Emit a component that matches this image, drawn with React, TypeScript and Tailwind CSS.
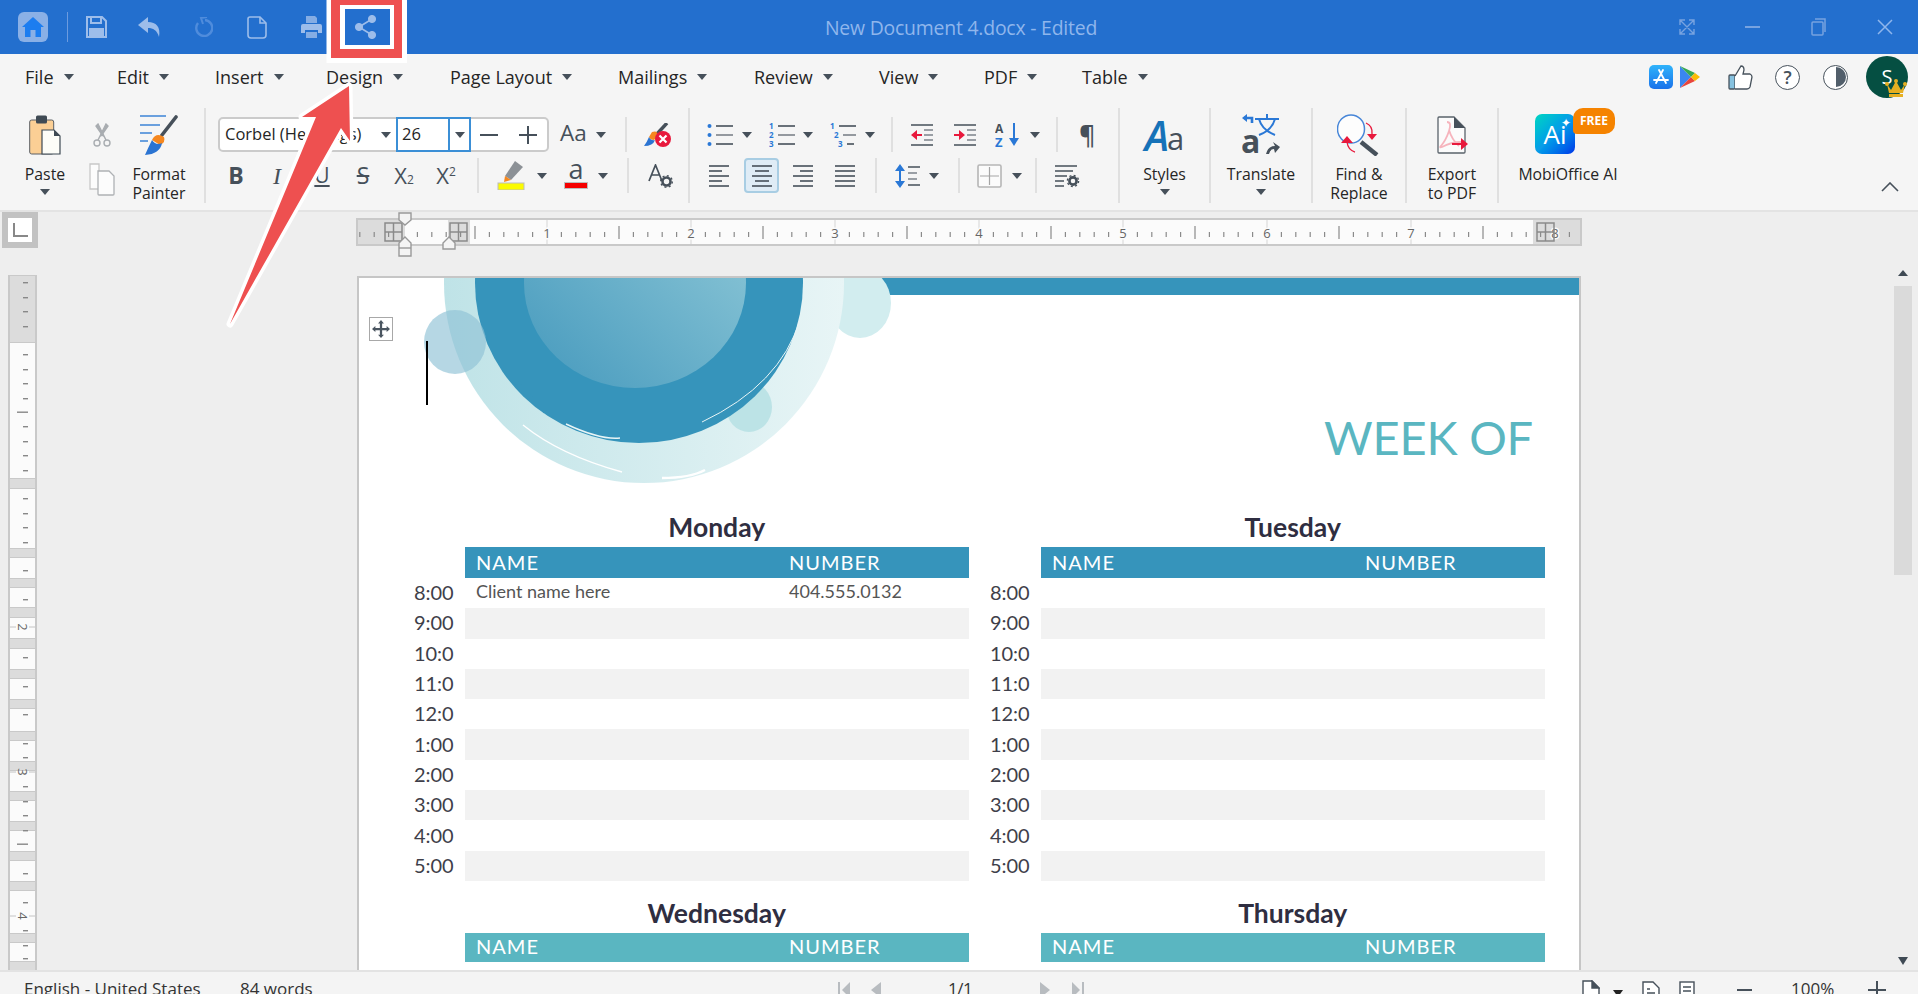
import React from 'react';

const TIMES = ['8:00', '9:00', '10:0', '11:0', '12:0', '1:00', '2:00', '3:00', '4:00', '5:00'];

// [top, bottom, isMargin] bands of the vertical ruler, screen y
const V_BANDS: [number, number, boolean][] = [
    [275, 341, true], [342, 477, false], [478, 487, true], [488, 547, false], [548, 556, true],
    [557, 577, false], [578, 586, true], [587, 606, false], [607, 616, true], [617, 637, false],
    [638, 647, true], [648, 668, false], [669, 677, true], [678, 698, false], [699, 707, true],
    [708, 730, false], [731, 739, true], [740, 760, false], [761, 769, true], [770, 790, false],
    [791, 799, true], [800, 820, false], [821, 829, true], [830, 850, false], [851, 859, true],
    [860, 880, false], [881, 889, true], [890, 932, false], [933, 941, true], [942, 960, false],
    [961, 970, true],
];
const V_TICKS = [283, 298, 312, 327, 355, 370, 384, 399, 427, 442, 456, 471, 499, 514, 528, 543, 571, 600, 658, 687, 715, 744, 758, 787, 802, 816, 831, 874, 903, 931, 946, 959];

function Caret({ className = '' }: { className?: string }) {
    return <div className={`w-0 h-0 shrink-0 border-x-[5px] border-x-transparent border-t-[6px] border-t-[#46505a] ${className}`} />;
}

function Sep({ className = '' }: { className?: string }) {
    return <div className={`w-[2px] shrink-0 self-stretch bg-[#e0e0e0] ${className}`} />;
}

function TitleBar() {
    const c = '#9dbdea';
    return (
        <div className="h-[54px] shrink-0 bg-[#236fce] flex items-center relative">
            <div className="ml-[18px] w-[30px] h-[30px] rounded-[6px] bg-[#8ab0e6] flex items-center justify-center">
                <svg width="24" height="24" viewBox="0 0 24 24"><path d="M12 2 L23 12 H20 V22 H14.5 V15 H9.5 V22 H4 V12 H1 Z" fill="#1c7df0" /></svg>
            </div>
            <div className="ml-[19px] w-[1px] h-[30px] bg-[#6c9bdf]" />
            <svg className="ml-[18px]" width="21" height="22" viewBox="0 0 21 22" fill="none" stroke={c} strokeWidth="2"><path d="M1 1 H16 L20 5 V21 H1 Z" /><path d="M5 1 V7 H15 V1" /><path d="M4 13 H17 V21 H4 Z" fill={c} /></svg>
            <svg className="ml-[31px]" width="23" height="20" viewBox="0 0 23 20"><path d="M10 0 L0 8 L10 16 V11 C15 11 19 13 21 20 C23 10 18 5 10 5 Z" fill={c} /></svg>
            <svg className="ml-[33px]" width="19" height="20" viewBox="0 0 19 20" fill="none" stroke="#4f8cdc" strokeWidth="2.4"><path d="M11 3 A8 8 0 1 1 4 6" /><path d="M13 0 L7 1 L9 7" strokeWidth="2" /></svg>
            <svg className="ml-[34px]" width="20" height="23" viewBox="0 0 20 23" fill="none" stroke={c} strokeWidth="1.6"><path d="M3 1 H13 L19 7 V19 Q19 22 16 22 H4 Q1 22 1 19 V3 Q1 1 3 1 Z" /><path d="M13 1 V7 H19" /></svg>
            <svg className="ml-[34px]" width="21" height="24" viewBox="0 0 21 24" fill={c}><path d="M5 1 H14 L16 3 V8 H5 Z" fillOpacity="0.8" /><path d="M2 9 H19 Q21 9 21 11 V18 H17 V15 H4 V18 H0 V11 Q0 9 2 9 Z" /><path d="M5 17 H16 V23 H5 Z" fillOpacity="0.8" /></svg>
            <div className="absolute left-0 right-0 top-0 h-full flex items-center justify-center font-['Open_Sans',sans-serif] text-[19.4px] text-[#8fb6ec] pl-[4px] pt-[1px] -tracking-[0.2px]">New Document 4.docx - Edited</div>
            <div className="ml-auto mr-[25px] flex items-center">
                <svg width="16" height="16" viewBox="0 0 16 16" fill="none" stroke="#77a3e0" strokeWidth="1.4"><path d="M1 1 L15 15 M15 1 L1 15 M1 6 V1 H6 M10 1 H15 V6 M1 10 V15 H6 M10 15 H15 V10" /></svg>
                <div className="ml-[50px] w-[15px] h-[2px] bg-[#77a3e0]" />
                <svg className="ml-[51px]" width="15" height="18" viewBox="0 0 15 18" fill="none" stroke="#77a3e0" strokeWidth="1.5"><rect x="1" y="4" width="11" height="13" rx="1" /><path d="M4 1 H14 V14" /></svg>
                <svg className="ml-[51px]" width="16" height="16" viewBox="0 0 16 16" stroke="#8fb6ec" strokeWidth="1.5"><path d="M1 1 L15 15 M15 1 L1 15" /></svg>
            </div>
        </div>
    );
}

function MenuItem({ label, w }: { label: string, w: string }) {
    return (
        <div className={`flex items-center gap-[10px] ${w}`}>
            <span>{label}</span>
            <Caret />
        </div>
    );
}

function MenuRow() {
    return (
        <div className="h-[46px] shrink-0 flex items-center pl-[25px] font-['Open_Sans',sans-serif] text-[18px] text-[#252525]">
            <MenuItem label="File" w="w-[92px]" />
            <MenuItem label="Edit" w="w-[98px]" />
            <MenuItem label="Insert" w="w-[111px]" />
            <MenuItem label="Design" w="w-[124px]" />
            <MenuItem label="Page Layout" w="w-[168px]" />
            <MenuItem label="Mailings" w="w-[136px]" />
            <MenuItem label="Review" w="w-[125px]" />
            <MenuItem label="View" w="w-[105px]" />
            <MenuItem label="PDF" w="w-[98px]" />
            <MenuItem label="Table" w="w-[90px]" />
            <div className="ml-auto mr-[10px] flex items-center">
                <svg width="24" height="24" viewBox="0 0 24 24">
                    <defs><linearGradient id="aps" x1="0" y1="0" x2="0" y2="1"><stop offset="0" stopColor="#2fb3fb" /><stop offset="1" stopColor="#1a72ea" /></linearGradient></defs>
                    <rect width="24" height="24" rx="5" fill="url(#aps)" />
                    <path d="M14 5 L7 18 M10 5 L17 18 M5 15 H19" stroke="#fff" strokeWidth="1.8" strokeLinecap="round" />
                </svg>
                <svg className="ml-[7px]" width="20" height="24" viewBox="0 0 20 24">
                    <path d="M0 1 L0 23 L11 12 Z" fill="#3a86f0" />
                    <path d="M0 1 L11 12 L15 8 Z" fill="#35a853" />
                    <path d="M0 23 L11 12 L15 16 Z" fill="#e8453c" />
                    <path d="M15 8 L20 12 L15 16 L11 12 Z" fill="#fbbc05" />
                </svg>
                <svg className="ml-[28px]" width="25" height="25" viewBox="0 0 25 25" fill="none" stroke="#47525c" strokeWidth="1.3">
                    <rect x="1" y="10" width="6" height="14" rx="1" fill="#86c2e0" />
                    <path d="M7 11 L13 1 Q16 1 16 5 L15 9 H22 Q24 10 24 12 L22 22 Q21 24 19 24 H7" fill="#fff" />
                </svg>
                <div className="ml-[22px] w-[25px] h-[25px] rounded-full border-[1.5px] border-[#47525c] bg-white flex items-center justify-center font-['Open_Sans',sans-serif] font-semibold text-[18px] leading-none text-[#47525c]">?</div>
                <div className="ml-[23px] w-[25px] h-[25px] rounded-full border-[1.5px] border-[#47525c] bg-white overflow-hidden flex justify-end p-[1.5px]">
                    <div className="w-1/2 h-full bg-[#525f6b] rounded-r-full" />
                </div>
                <div className="relative ml-[18px] w-[42px] h-[42px] rounded-full bg-[#054f42] flex items-center justify-center font-['Open_Sans',sans-serif] text-[20px] text-white">
                    S
                    <svg className="absolute left-[19px] top-[23px]" width="22" height="18" viewBox="0 0 22 18" fill="#e6af22"><path d="M2 5 L6 11 L11 2 L16 11 L20 5 L18 14 H4 Z" /><circle cx="2" cy="5" r="2" /><circle cx="11" cy="2" r="2" /><circle cx="20" cy="5" r="2" /><rect x="4" y="15" width="14" height="3" /></svg>
                </div>
            </div>
        </div>
    );
}

function BigLabel({ lines, caret }: { lines: string[], caret?: boolean }) {
    return (
        <div className="mt-[3px] flex flex-col items-center text-[15.8px] leading-[19px] text-[#252525]">
            {lines.map((l) => <span key={l} className="whitespace-nowrap">{l}</span>)}
            {caret && <Caret className="mt-[5px]" />}
        </div>
    );
}

function ClipboardGroup() {
    return (
        <div className="flex w-[204px] shrink-0">
            <div className="w-[90px] flex flex-col items-center">
                <div className="h-[54px] flex items-center">
                    <svg width="32" height="40" viewBox="0 0 32 40">
                        <rect x="0.7" y="5" width="24" height="34" rx="2" fill="#fbcf95" stroke="#5a5f64" />
                        <rect x="7" y="0.5" width="11" height="8" rx="1.5" fill="#3f4a54" />
                        <path d="M13 15 H25 L31 21 V39 H13 Z" fill="#fdfdf8" stroke="#3f4a54" strokeWidth="1.2" />
                        <path d="M25 15 L31 21 H25 Z" fill="#3f4a54" />
                    </svg>
                </div>
                <BigLabel lines={['Paste']} caret />
            </div>
            <div className="w-[24px] flex flex-col items-center">
                <svg className="mt-[15px]" width="18" height="24" viewBox="0 0 18 24" fill="none" stroke="#a9adb1" strokeWidth="1.4">
                    <circle cx="4" cy="20" r="3" /><circle cx="14" cy="20" r="3" />
                    <path d="M5 17 L13 1 L15 3 L8 13" fill="#a9adb1" /><path d="M13 17 L5 1 L3 3 L10 13" fill="#a9adb1" />
                </svg>
                <svg className="mt-[16px]" width="26" height="33" viewBox="0 0 26 33" fill="#fcfcfc" stroke="#c8c8c8" strokeWidth="1.3">
                    <path d="M1 1 H10 V26 H1 Z" />
                    <path d="M9 8 H20 L25 13 V31 Q25 32 24 32 H10 Q9 32 9 31 Z" stroke="#aeb1b4" />
                </svg>
            </div>
            <div className="w-[90px] flex flex-col items-center">
                <div className="h-[54px] flex items-center">
                    <svg width="38" height="42" viewBox="0 0 38 42">
                        <path d="M0 2 H26 M0 11 H20 M0 19 H12 M0 27 H8" stroke="#3d84d6" strokeWidth="1.6" />
                        <path d="M36 3 L22 21" stroke="#46505a" strokeWidth="3.6" strokeLinecap="round" />
                        <path d="M12 26 Q16 18 24 23 Q26 28 20 31 Z" fill="#f5871f" />
                        <path d="M12 26 Q8 34 5 41 Q20 40 22 29 Q16 32 12 26 Z" fill="#2b74d2" />
                    </svg>
                </div>
                <BigLabel lines={['Format', 'Painter']} />
            </div>
        </div>
    );
}

function FontGroup() {
    return (
        <div className="w-[482px] shrink-0 pt-[9px] font-['Open_Sans',sans-serif] text-[#46505a]">
            <div className="flex items-center h-[35px]">
                <div className="ml-[12px] w-[331px] h-[35px] flex border-2 border-[#cbcbcb] rounded-[5px] bg-white">
                    <div className="w-[176px] flex items-center pl-[5px] text-[16.5px] text-[#252525]">
                        <span className="w-[158px] whitespace-nowrap overflow-hidden">Corbel (Headings)</span>
                        <Caret className="ml-[-2px]" />
                    </div>
                    <div className="w-[54px] -my-[2px] flex items-center pl-[4px] border-2 border-[#3b8fd6] text-[16.5px] text-[#252525]">26</div>
                    <div className="w-[23px] -my-[2px] -ml-[2px] flex items-center justify-center border-2 border-[#3b8fd6]"><Caret /></div>
                    <div className="ml-[9px] w-[18px] h-[2px] self-center bg-[#46505a]" />
                    <div className="ml-[21px] w-[18px] h-[18px] self-center relative">
                        <div className="absolute left-0 top-[8px] w-full h-[2px] bg-[#46505a]" />
                        <div className="absolute top-0 left-[8px] h-full w-[2px] bg-[#46505a]" />
                    </div>
                </div>
                <span className="ml-[11px] w-[27px] text-[22.5px] leading-none -mt-[3px] whitespace-nowrap">Aa</span>
                <Caret className="ml-[9px]" />
                <Sep className="ml-[19px]" />
                <svg className="ml-[17px]" width="27" height="24" viewBox="0 0 27 24">
                    <path d="M23 0 L12 12" stroke="#46505a" strokeWidth="3.4" />
                    <path d="M8 9 Q14 7 14 13 L10 17 Q6 17 5 14 Z" fill="#f5871f" />
                    <path d="M5 14 Q3 19 0 23 Q9 23 11 17 Q7 18 5 14 Z" fill="#2b74d2" />
                    <circle cx="19" cy="16" r="8" fill="#e8193c" />
                    <path d="M15.5 12.5 L22.5 19.5 M22.5 12.5 L15.5 19.5" stroke="#fff" strokeWidth="2.2" />
                </svg>
            </div>
            <div className="flex items-center h-[35px] mt-[6px]">
                <div className="ml-[10px] w-[40px] text-center text-[23px] font-bold">B</div>
                <div className="w-[42px] text-center text-[24px] italic font-['Liberation_Serif',serif]">I</div>
                <div className="w-[48px] text-center text-[21px] underline">U</div>
                <div className="w-[34px] text-center text-[23px] line-through">S</div>
                <div className="w-[48px] text-center text-[22px]">X<span className="text-[12px]">2</span></div>
                <div className="w-[36px] text-center text-[22px] whitespace-nowrap">X<span className="text-[12px] align-super leading-none">2</span></div>
                <Sep className="ml-[13px]" />
                <svg className="ml-[18px]" width="28" height="29" viewBox="0 0 28 29">
                    <path d="M18 0 L26 6 L14 19 L8 15 Z" fill="#8c9196" />
                    <path d="M8 15 L14 19 L7 21 Z" fill="#f5871f" />
                    <rect x="1" y="22" width="26" height="7" fill="#fbfb00" stroke="#bdbdbd" />
                </svg>
                <Caret className="ml-[12px]" />
                <div className="ml-[17px] w-[24px] flex flex-col items-center">
                    <span className="text-[27px] leading-[22px] -mt-[4px]">a</span>
                    <div className="mt-[2px] w-full h-[7px] bg-[#f50000] border border-[#bdbdbd]" />
                </div>
                <Caret className="ml-[10px]" />
                <Sep className="ml-[19px]" />
                <svg className="ml-[19px]" width="25" height="24" viewBox="0 0 25 24" fill="none">
                    <path d="M1 17 L7.5 1 L14 17 M3.5 11 H11.5" stroke="#46505a" strokeWidth="1.7" />
                    <circle cx="18.5" cy="17.5" r="4" stroke="#46505a" strokeWidth="2.6" />
                    <circle cx="18.5" cy="17.5" r="5.8" stroke="#46505a" strokeWidth="1.4" strokeDasharray="2 2.5" />
                </svg>
            </div>
        </div>
    );
}

function ListIcon({ kind }: { kind: 'bullet' | 'num' | 'multi' }) {
    const dy = [3, 12, 21];
    const nums = ['1', '2', '3'];
    const indent = kind === 'multi' ? [0, 4, 8] : [0, 0, 0];
    return (
        <svg width="26" height="24" viewBox="0 0 26 24">
            {dy.map((y, i) => (
                <g key={y}>
                    {kind === 'bullet'
                        ? <circle cx="2.5" cy={y} r="2" fill="#2a78d6" />
                        : <text x={indent[i]} y={y + 3} fontSize="8" fontWeight="700" fontFamily="Open Sans" fill="#2a78d6">{nums[i]}</text>}
                    <path d={`M${9 + indent[i]} ${y} H${kind === 'multi' && i === 2 ? 24 : 26}`} stroke={i === 1 ? '#7c838a' : '#46505a'} strokeWidth="1.6" />
                </g>
            ))}
        </svg>
    );
}

function AlignLines({ w }: { w: number[] }) {
    // offsets and lengths of five lines in a 20 wide box
    return (
        <svg width="20" height="24" viewBox="0 0 20 24" stroke="#46505a" strokeWidth="1.6">
            {w.map((d, i) => <path key={i} d={d === 0 ? `M0 ${2 + i * 5} H20` : `M${d > 0 ? 0 : -d} ${2 + i * 5} H${d > 0 ? d : 20 + (d === -3 ? -3 : 0)}`} />)}
        </svg>
    );
}

function IndentIcon({ flip }: { flip?: boolean }) {
    return (
        <svg width="22" height="24" viewBox="0 0 22 24">
            <path d="M0 2 H22 M0 22 H22" stroke="#46505a" strokeWidth="1.5" />
            <path d="M13 7 H22 M13 12 H22 M13 17 H22" stroke="#7c838a" strokeWidth="1.5" />
            {flip
                ? <path d="M0 11 H5 V7 L11 12 L5 17 V13 H0 Z" fill="#e8193c" />
                : <path d="M11 11 H6 V7 L0 12 L6 17 V13 H11 Z" fill="#e8193c" />}
        </svg>
    );
}

function ParagraphGroup() {
    return (
        <div className="w-[428px] shrink-0 pt-[9px]">
            <div className="flex items-center h-[35px]">
                <div className="ml-[17px]"><ListIcon kind="bullet" /></div>
                <Caret className="ml-[9px]" />
                <div className="ml-[17px]"><ListIcon kind="num" /></div>
                <Caret className="ml-[8px]" />
                <div className="ml-[17px]"><ListIcon kind="multi" /></div>
                <Caret className="ml-[9px]" />
                <Sep className="ml-[16px]" />
                <div className="ml-[18px]"><IndentIcon /></div>
                <div className="ml-[21px]"><IndentIcon flip /></div>
                <svg className="ml-[19px]" width="25" height="26" viewBox="0 0 25 26">
                    <text x="0" y="11" fontSize="12" fontWeight="700" fontFamily="Open Sans" fill="#46505a">A</text>
                    <text x="0" y="25" fontSize="13" fontWeight="700" fontFamily="Open Sans" fill="#2a78d6">Z</text>
                    <path d="M19 1 V18" stroke="#2a78d6" strokeWidth="2" />
                    <path d="M14 16 H24 L19 24 Z" fill="#2a78d6" />
                </svg>
                <Caret className="ml-[10px]" />
                <Sep className="ml-[16px]" />
                <span className="ml-[21px] font-['Open_Sans',sans-serif] font-semibold text-[25px] leading-none text-[#46505a]">¶</span>
            </div>
            <div className="flex items-center h-[35px] mt-[6px]">
                <div className="ml-[19px]"><AlignLines w={[20, 13, 20, 13, 20]} /></div>
                <div className="ml-[15px] w-[35px] h-[35px] bg-[#dfecf6] border-2 border-[#a8cde3] rounded-[4px] flex items-center justify-center">
                    <AlignLines w={[0, -3, 0, -3, 0]} />
                </div>
                <div className="ml-[14px]"><AlignLines w={[0, -7, 0, -7, 0]} /></div>
                <div className="ml-[22px]"><AlignLines w={[0, 0, 0, 0, 0]} /></div>
                <Sep className="ml-[20px]" />
                <svg className="ml-[18px]" width="25" height="24" viewBox="0 0 25 24">
                    <path d="M5 3 V21" stroke="#2a78d6" strokeWidth="2" />
                    <path d="M0 7 L5 0 L10 7 Z M0 17 L5 24 L10 17 Z" fill="#2a78d6" />
                    <path d="M13 3 H25 M13 21 H25" stroke="#46505a" strokeWidth="1.5" />
                    <path d="M13 9 H22 M13 15 H22" stroke="#7c838a" strokeWidth="1.5" />
                </svg>
                <Caret className="ml-[9px]" />
                <Sep className="ml-[19px]" />
                <svg className="ml-[17px]" width="25" height="24" viewBox="0 0 25 24">
                    <rect x="1" y="1" width="23" height="22" rx="1.5" fill="#fbfbfb" stroke="#b6b6b6" strokeWidth="1.6" />
                    <path d="M12.5 3 V21 M3 12 H22" stroke="#a5a5a5" strokeWidth="1.2" />
                </svg>
                <Caret className="ml-[10px]" />
                <Sep className="ml-[13px]" />
                <svg className="ml-[18px]" width="25" height="24" viewBox="0 0 25 24" fill="none">
                    <path d="M0 2 H22 M0 7 H18 M0 12 H12 M0 17 H9 M0 22 H9" stroke="#46505a" strokeWidth="1.4" />
                    <circle cx="18" cy="17" r="3.6" stroke="#46505a" strokeWidth="2.6" />
                    <circle cx="18" cy="17" r="5.6" stroke="#46505a" strokeWidth="1.4" strokeDasharray="2 2.4" />
                </svg>
            </div>
        </div>
    );
}

function BigGroups() {
    return (
        <>
            <div className="w-[89px] shrink-0 flex flex-col items-center">
                <div className="h-[54px] flex items-center relative font-['Open_Sans',sans-serif] text-[#1672b8] leading-none">
                    <span className="text-[41px] font-semibold italic">A</span>
                    <span className="text-[31px] text-[#46505a] -ml-[2px] mt-[6px]">a</span>
                </div>
                <BigLabel lines={['Styles']} caret />
            </div>
            <Sep />
            <div className="w-[100px] shrink-0 flex flex-col items-center">
                <div className="h-[54px] flex items-center">
                    <svg width="38" height="42" viewBox="0 0 38 42">
                        <path d="M2 4 H10 V9" fill="none" stroke="#2a78d6" strokeWidth="2.6" />
                        <path d="M0 4 L5 0 V8 Z" fill="#2a78d6" />
                        <path d="M13 5 H37 M25 0 V5 M17 5 Q20 16 33 21 M33 5 Q30 16 17 21" fill="none" stroke="#2a78d6" strokeWidth="2" />
                        <text x="-1" y="39" fontSize="32" fontWeight="700" fontFamily="Open Sans" fill="#46505a">a</text>
                        <path d="M24 40 Q26 32 33 32 L31 28 L38 33 L33 39 L32 35 Q28 35 27 40 Z" fill="#46505a" />
                    </svg>
                </div>
                <BigLabel lines={['Translate']} caret />
            </div>
            <Sep />
            <div className="w-[92px] shrink-0 flex flex-col items-center">
                <div className="h-[54px] flex items-center">
                    <svg width="44" height="42" viewBox="0 0 44 42" fill="none">
                        <ellipse cx="14" cy="15" rx="13.5" ry="14" fill="#fdfdfd" stroke="#4786d8" strokeWidth="1.5" />
                        <path d="M24 28 L40 41" stroke="#46505a" strokeWidth="4.4" />
                        <path d="M29 9 Q36 12 35 20" stroke="#e8193c" strokeWidth="1.3" />
                        <path d="M30 20 H40 L35 26 Z" fill="#e8193c" />
                        <path d="M18 38 Q11 36 10 28" stroke="#e8193c" strokeWidth="1.3" />
                        <path d="M4 29 H16 L10 22 Z" fill="#e8193c" />
                    </svg>
                </div>
                <BigLabel lines={['Find &', 'Replace']} />
            </div>
            <Sep />
            <div className="w-[90px] shrink-0 flex flex-col items-center">
                <div className="h-[54px] flex items-center">
                    <svg width="31" height="38" viewBox="0 0 31 38" fill="none">
                        <path d="M2 1 H17 L28 12 V36 Q28 37 27 37 H2 Q1 37 1 36 V2 Q1 1 2 1 Z" fill="#fbfbfb" stroke="#5a636b" strokeWidth="1.3" />
                        <path d="M17 1 L28 12 H17 Z" fill="#46505a" />
                        <path d="M10 6 Q15 6 12 15 Q9 24 4 30 Q2 32 5 31 Q14 26 24 26 M12 14 Q15 24 22 30" stroke="#f6b4bd" strokeWidth="1.8" />
                        <path d="M15 27 H24 V22 L31 28 L24 34 V29 H15 Z" fill="#e8193c" />
                    </svg>
                </div>
                <BigLabel lines={['Export', 'to PDF']} />
            </div>
            <Sep />
            <div className="w-[138px] shrink-0 flex flex-col items-center relative">
                <div className="h-[54px] flex items-center mr-[26px]">
                    <div className="w-[40px] h-[40px] rounded-[7px] bg-gradient-to-br from-[#08d5c0] via-[#0a9be8] to-[#0a30e8] relative flex items-center justify-center font-['Open_Sans',sans-serif] text-[26px] text-white leading-none mt-[-3px]">
                        Ai
                        <span className="absolute right-[4px] top-[3px] text-[12px]">✦</span>
                    </div>
                </div>
                <div className="absolute left-[74px] top-0 w-[42px] h-[26px] rounded-[10px] rounded-bl-[4px] bg-[#f58300] flex items-center justify-center font-['Open_Sans',sans-serif] font-bold text-[12px] text-white">FREE</div>
                <BigLabel lines={['MobiOffice AI']} />
            </div>
            <div className="ml-auto mr-[19px] mt-[74px]">
                <svg width="18" height="10" viewBox="0 0 18 10" fill="none" stroke="#46505a" strokeWidth="1.6"><path d="M1 9 L9 1 L17 9" /></svg>
            </div>
        </>
    );
}

function Ribbon() {
    return (
        <div className="h-[158px] shrink-0 bg-[#f5f5f5] border-b-2 border-[#e3e3e3] flex flex-col font-['Open_Sans',sans-serif]">
            <MenuRow />
            <div className="flex h-[95px] mt-[8px]">
                <ClipboardGroup />
                <Sep />
                <FontGroup />
                <Sep />
                <ParagraphGroup />
                <Sep />
                <BigGroups />
            </div>
        </div>
    );
}

function VerticalRuler() {
    return (
        <svg className="ml-[8px] mt-[27px]" width="29" height="695" viewBox="8 275 29 695">
            <rect x="8" y="275" width="29" height="695" fill="#c9c9c9" />
            {V_BANDS.map(([a, b, m]) => (
                <rect key={a} x="10" y={a + 1} width="25" height={b - a} fill={m ? '#dcdcdc' : '#fbfbfb'} />
            ))}
            {V_TICKS.map((y) => <rect key={y} x="23" y={y - 1} width="5" height="1.4" fill="#888" />)}
            <rect x="17" y="411.5" width="11" height="1.4" fill="#888" />
            <rect x="17" y="843.5" width="11" height="1.4" fill="#888" />
            {[[2, 627], [3, 772], [4, 916]].map(([n, y]) => (
                <g key={n}>
                    <path d={`M10 ${y} H16 M29 ${y} H35`} stroke="#c4c4c4" />
                    <text x="0" y="0" fontSize="13" fontFamily="Open Sans" fill="#666" textAnchor="middle" transform={`translate(18 ${y}) rotate(90)`}>{n}</text>
                </g>
            ))}
        </svg>
    );
}

function TableHandle({ x }: { x: number }) {
    return (
        <g fill="none" stroke="#8a8a8a" strokeWidth="1.5">
            <rect x={x} y="223" width="17" height="18" />
            <path d={`M${x + 8.5} 223 V241 M${x} 232 H${x + 17}`} />
        </g>
    );
}

function HorizontalRuler() {
    const ticks: { x: number, tall: boolean }[] = [];
    for (let i = -3; i <= 82; i++) {
        if (i % 10 === 0) continue;
        ticks.push({ x: 403 + i * 14.4, tall: i % 5 === 0 });
    }
    return (
        <svg width="1226" height="46" viewBox="356 212 1226 46" className="shrink-0">
            <rect x="356" y="218" width="1226" height="28" fill="#c9c9c9" />
            <rect x="358" y="220" width="1222" height="24" fill="#dcdcdc" />
            <rect x="405" y="220" width="43" height="24" fill="#fbfbfb" />
            <rect x="470" y="220" width="1063" height="24" fill="#fbfbfb" />
            {ticks.map((t) => (t.x < 358 ? null : (
                <rect key={t.x} x={t.x - 0.6} y={t.tall ? 226 : 232} width="1.2" height={t.tall ? 13 : 5} fill="#8a8a8a" />
            )))}
            {[1, 2, 3, 4, 5, 6, 7, 8].map((n) => (
                <g key={n}>
                    {n < 8 && <path d={`M${403 + n * 144} 220 V244`} stroke="#d5d5d5" />}
                    <text x={403 + n * 144} y="238" fontSize="13" fontFamily="Open Sans" fill="#666" textAnchor="middle" stroke="#fbfbfb" strokeWidth="3" paintOrder="stroke">{n}</text>
                </g>
            ))}
            <TableHandle x={385} />
            <TableHandle x={450} />
            <TableHandle x={1537} />
            <g fill="#f4f4f4" stroke="#999" strokeWidth="1.4">
                <path d="M399 213 H411 V220 L405 225 L399 220 Z" />
                <path d="M399 243 L405 237 L411 243 V256 H399 Z" />
                <path d="M399 248 H411" fill="none" />
                <path d="M443 243 L449 237 L455 243 V249 H443 Z" />
            </g>
        </svg>
    );
}

function Artwork() {
    return (
        <svg className="absolute left-0 top-0" width="1222" height="230" viewBox="359 278 1222 230">
            <defs>
                <linearGradient id="outer" x1="0" y1="0" x2="1" y2="0">
                    <stop offset="0" stopColor="#bfe3e7" />
                    <stop offset="1" stopColor="#e8f5f6" />
                </linearGradient>
                <linearGradient id="inner" x1="0" y1="1" x2="1" y2="0">
                    <stop offset="0" stopColor="#4599bd" />
                    <stop offset="1" stopColor="#93cbd9" />
                </linearGradient>
            </defs>
            <ellipse cx="860" cy="303" rx="31" ry="35" fill="#d2edef" />
            <ellipse cx="644" cy="283" rx="200" ry="200" fill="url(#outer)" />
            <ellipse cx="749" cy="407" rx="23" ry="25" fill="#bce3e6" />
            <path d="M523 425 Q560 455 622 472" fill="none" stroke="#fff" strokeWidth="1.4" />
            <path d="M662 478 Q690 478 705 470" fill="none" stroke="#fff" strokeWidth="2.4" />
            <ellipse cx="639" cy="283" rx="164" ry="160" fill="#3694bb" />
            <path d="M517 383 L545 412" stroke="#3694bb" strokeWidth="3.4" />
            <path d="M566 424 Q600 440 620 438" fill="none" stroke="#e8f5f6" strokeWidth="1.4" />
            <path d="M800 320 Q780 385 702 422" fill="none" stroke="#e8f5f6" strokeWidth="1" />
            <ellipse cx="635" cy="283" rx="111" ry="105" fill="url(#inner)" />
            <ellipse cx="455" cy="342" rx="31" ry="32" fill="#8fc1d6" fillOpacity="0.65" />
        </svg>
    );
}

function Day({ title, head, headH, client }: { title: string, head: string, headH: string, client?: boolean }) {
    return (
        <div>
            <div className="h-[37px] ml-[50.5px] text-center font-['Lato',sans-serif] font-bold text-[26.5px] leading-[35px] text-[#2f2e41]">{title}</div>
            <div className={`ml-[50.5px] flex items-center pl-[11.5px] pb-[2px] ${headH} ${head} font-['Lato',sans-serif] text-[20px] tracking-[1px] text-white`}>
                <span className="w-[313px]">NAME</span>
                <span>NUMBER</span>
            </div>
            {TIMES.map((t, i) => (
                <div key={t} className="flex h-[30.3px] items-center font-['Lato',sans-serif] text-[20px] text-[#3f3f4a]">
                    <span className="w-[50.5px] shrink-0 pb-[2px] -tracking-[0.1px]">{t}</span>
                    <div className={`flex-1 self-stretch flex items-center pl-[11.5px] pb-[3px] text-[18px] text-[#555] ${i % 2 ? 'bg-[#f2f2f2]' : ''}`}>
                        {client && i === 0 && (
                            <>
                                <span className="w-[313px]">Client name here</span>
                                <span>404.555.0132</span>
                            </>
                        )}
                    </div>
                </div>
            ))}
        </div>
    );
}

function Page() {
    return (
        <div className="relative flex-1 ml-[1px] mt-[18px] w-[1224px] bg-white border-x-2 border-t-2 border-[#c6c6c6] overflow-hidden">
            <div className="ml-[285px] h-[17px] bg-[#3694bb]" />
            <Artwork />
            <div className="absolute left-[10px] top-[39px] w-[24px] h-[24px] border border-[#a8a8a8] bg-white flex items-center justify-center">
                <svg width="18" height="18" viewBox="0 0 16 16" fill="#4a5560"><path d="M8 0 L10.6 3 H9 V7 H13 V5.4 L16 8 L13 10.6 V9 H9 V13 H10.6 L8 16 L5.4 13 H7 V9 H3 V10.6 L0 8 L3 5.4 V7 H7 V3 H5.4 Z" /></svg>
            </div>
            <div className="absolute left-[67px] top-[63px] w-[2px] h-[64px] bg-black" />
            <div className="relative h-[215px] pt-[117px] pr-[46px] text-right font-['Lato',sans-serif] font-normal text-[47px] leading-[50px] -tracking-[0.2px] text-[#5ab6c1]">WEEK OF</div>
            <div className="relative pl-[55px] grid grid-cols-[555px_555px] gap-x-[21px]">
                <Day title="Monday" head="bg-[#3694bb]" headH="h-[31px]" client />
                <Day title="Tuesday" head="bg-[#3694bb]" headH="h-[31px]" />
                <div className="mt-[15px]"><Day title="Wednesday" head="bg-[#5ab6c1]" headH="h-[29px]" /></div>
                <div className="mt-[15px]"><Day title="Thursday" head="bg-[#5ab6c1]" headH="h-[29px]" /></div>
            </div>
        </div>
    );
}

function Workspace() {
    return (
        <div className="flex-1 min-h-0 flex bg-[#eeeeee] overflow-hidden">
            <div className="w-[356px] shrink-0 flex flex-col">
                <div className="ml-[2px] w-[36px] h-[36px] bg-[#c2c2c2] flex items-center justify-center">
                    <div className="w-[24px] h-[24px] bg-white flex items-center justify-center">
                        <div className="w-[15px] h-[14px] border-l-[2px] border-b-[2px] border-[#888]" />
                    </div>
                </div>
                <VerticalRuler />
            </div>
            <div className="w-[1226px] shrink-0 flex flex-col">
                <HorizontalRuler />
                <Page />
            </div>
            <div className="flex-1 flex flex-col items-center w-[18px] ml-[312px] mr-[6px] pt-[58px] pb-[5px]">
                <div className="w-0 h-0 border-x-[5px] border-x-transparent border-b-[6px] border-b-[#3f4a54]" />
                <div className="mt-[10px] w-full h-[289px] bg-[#dadada]" />
                <div className="mt-auto w-0 h-0 border-x-[5px] border-x-transparent border-t-[8px] border-t-[#3f4a54]" />
            </div>
        </div>
    );
}

function StatusBar() {
    return (
        <div className="h-[24px] shrink-0 bg-[#f4f4f4] border-t-2 border-[#e3e3e3] overflow-hidden flex items-start pt-[7px] font-['Open_Sans',sans-serif] text-[17px] leading-[20px] text-[#333]">
            <span className="ml-[24px] w-[216px] whitespace-nowrap">English - United States</span>
            <span className="w-[100px] whitespace-nowrap">84 words</span>
            <div className="ml-[498px] flex items-start mt-[3px]">
                <svg width="12" height="16" viewBox="0 0 12 16" fill="#b8bcc0"><path d="M0 0 H2 V16 H0 Z M12 0 V16 L4 8 Z" /></svg>
                <svg className="ml-[21px]" width="10" height="16" viewBox="0 0 10 16" fill="#b8bcc0"><path d="M10 0 V16 L0 8 Z" /></svg>
            </div>
            <span className="ml-[67px] w-[92px] -tracking-[0.5px]">1/1</span>
            <div className="flex items-start mt-[3px]">
                <svg width="10" height="16" viewBox="0 0 10 16" fill="#b8bcc0"><path d="M0 0 V16 L10 8 Z" /></svg>
                <svg className="ml-[22px]" width="12" height="16" viewBox="0 0 12 16" fill="#b8bcc0"><path d="M10 0 H12 V16 H10 Z M0 0 V16 L8 8 Z" /></svg>
            </div>
            <div className="ml-[498px] flex items-start mt-[1px]">
                <svg width="18" height="22" viewBox="0 0 18 22" fill="#fff" stroke="#46505a" strokeWidth="1.4"><path d="M1 1 H10 L17 8 V21 H1 Z" /><path d="M10 1 V8 H17 Z" fill="#46505a" /></svg>
                <div className="ml-[13px] mt-[10px] w-0 h-0 border-x-[5px] border-x-transparent border-t-[7px] border-t-[#222]" />
                <svg className="ml-[19px] mt-[1px]" width="18" height="22" viewBox="0 0 18 22" fill="#fff" stroke="#46505a" strokeWidth="1.4"><path d="M1 1 H11 L17 7 V21 H1 Z" /><path d="M5 8 H8 M5 12 H13 M5 16 H13" /></svg>
                <svg className="ml-[19px] mt-[1px]" width="16" height="22" viewBox="0 0 16 22" fill="#fff" stroke="#46505a" strokeWidth="1.4"><rect x="1" y="1" width="14" height="20" /><path d="M4 6 H12 M4 10 H12 M4 14 H12" /></svg>
                <div className="ml-[42px] mt-[9px] w-[15px] h-[2px] bg-[#46505a]" />
            </div>
            <span className="ml-[39px] w-[77px]">100%</span>
            <div className="relative w-[18px] h-[18px] mt-[2px]">
                <div className="absolute left-0 top-[8px] w-full h-[2px] bg-[#46505a]" />
                <div className="absolute top-0 left-[8px] h-full w-[2px] bg-[#46505a]" />
            </div>
        </div>
    );
}

function Callout() {
    return (
        <svg className="absolute left-0 top-0 pointer-events-none" width="1918" height="994" viewBox="0 0 1918 994">
            <rect x="326.5" y="-10" width="80.5" height="73" fill="#fff" />
            <rect x="331" y="-10" width="71" height="68" fill="#ee5050" />
            <rect x="340" y="5" width="54" height="44" fill="#fff" />
            <rect x="345" y="9" width="45" height="36" fill="#236fce" />
            <svg x="355" y="15" width="21" height="24" viewBox="0 0 21 24" fill="#9dbdea" stroke="#9dbdea">
                <circle cx="17" cy="4" r="3.6" /><circle cx="4" cy="12" r="3.6" /><circle cx="17" cy="20" r="3.6" />
                <path d="M17 4 L4 12 L17 20" fill="none" strokeWidth="1.6" />
            </svg>
            <path d="M349 86 L350 141 L341 128 L230 324 L316 117 L302 117 Z" fill="#ee5050" stroke="#fff" strokeWidth="7" strokeLinejoin="round" paintOrder="stroke" />
        </svg>
    );
}

export default function App() {
    return (
        <div className="relative w-[1918px] h-[994px] overflow-hidden flex flex-col bg-[#eeeeee]">
            <TitleBar />
            <Ribbon />
            <Workspace />
            <StatusBar />
            <Callout />
        </div>
    );
}
